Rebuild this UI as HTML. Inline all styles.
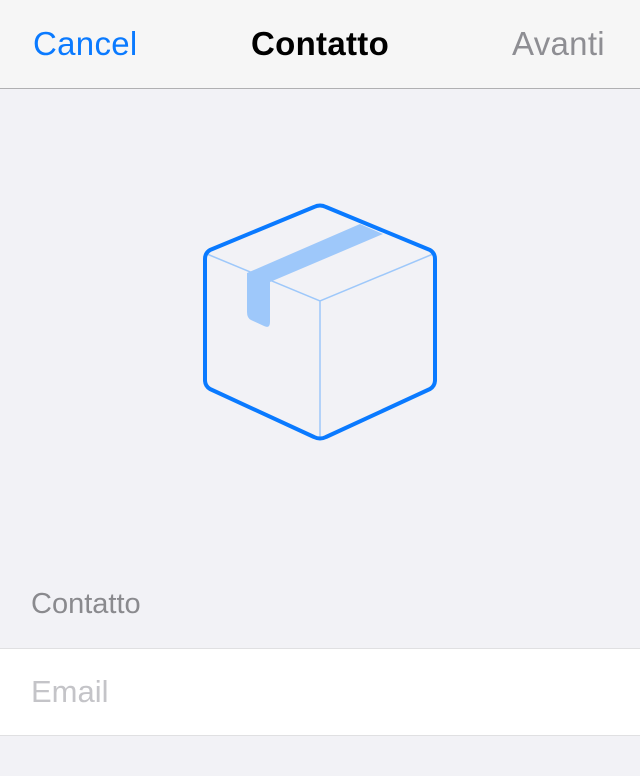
<!DOCTYPE html>
<html><head><style>
body{margin:0;width:640px;height:776px;background:#f2f2f6;font-family:"Liberation Sans",sans-serif;position:relative;overflow:hidden}
.nav{position:absolute;left:0;top:0;width:640px;height:88px;background:#f6f6f6;border-bottom:1px solid #b0b0b2}
.nav span{position:absolute;top:26px;font-size:33px;line-height:36px}
.lbl{position:absolute;left:31px;top:586px;font-size:29px;line-height:36px;color:#8a8a8e}
.row{position:absolute;left:0;top:648px;width:640px;height:86px;background:#fff;border-top:1px solid #e0e0e2;border-bottom:1px solid #e0e0e2}
.row span{position:absolute;left:31px;top:25px;font-size:31px;line-height:36px;color:#c4c4c8}
</style></head><body>
<div class="nav">
<span style="left:33px;color:#0a7aff;letter-spacing:0.3px">Cancel</span>
<span style="left:251px;color:#000;font-weight:bold;letter-spacing:0.3px">Contatto</span>
<span style="left:512px;color:#8e8e93;letter-spacing:0.3px">Avanti</span>
</div>
<svg style="position:absolute;left:0;top:0" width="640" height="776">
<path d="M247 273 L360 224 L383 234 L270 282 L270 322 Q270 329 264 326 L251 320 Q247 318 247 312 Z" fill="#9ec8fa"/>
<path d="M207 254 L320 301 L433 254 M320 301 L320 438" fill="none" stroke="#9ec8fa" stroke-width="1.5"/>
<path d="M314 207 Q320 204 326 207 L430 250 Q435 253 435 259 L435 380 Q435 386 430 389 L326 437 Q320 440 314 437 L210 389 Q205 386 205 380 L205 259 Q205 253 210 250 Z" fill="none" stroke="#0a7aff" stroke-width="4" stroke-linejoin="round"/>
</svg>
<div class="lbl">Contatto</div>
<div class="row"><span>Email</span></div>
</body></html>
